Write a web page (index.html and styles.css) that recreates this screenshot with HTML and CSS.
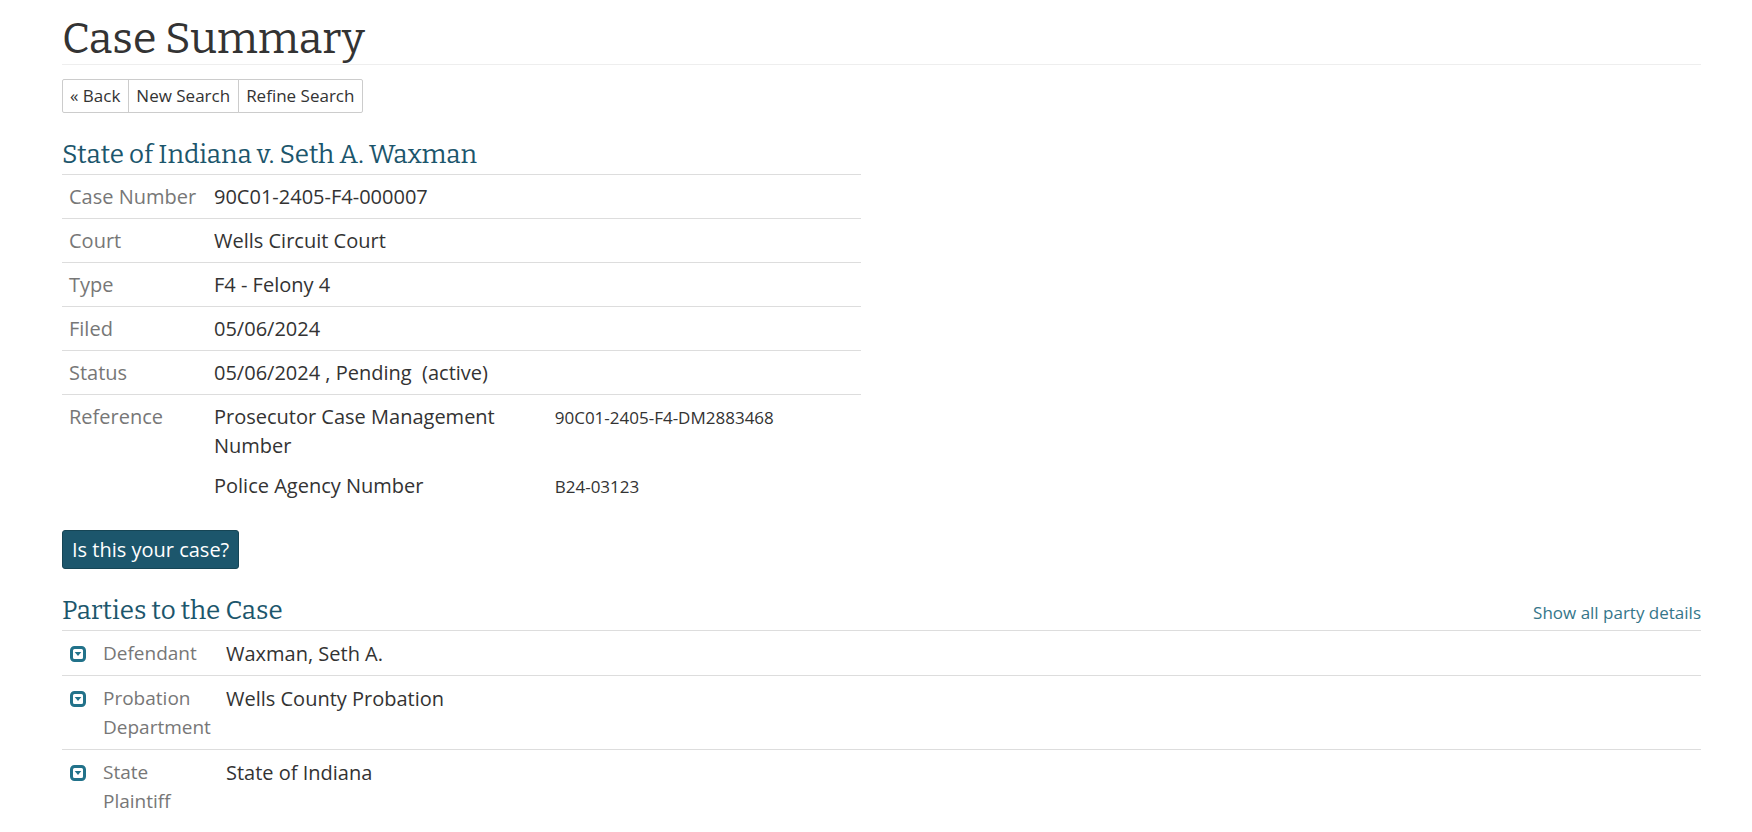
FILE: index.html
```html
<!DOCTYPE html>
<html lang="en">
<head>
    <meta charset="UTF-8">
    <meta name="viewport" content="width=device-width, initial-scale=1.0">
    <title>Case Summary</title>
    <link rel="stylesheet" href="styles.css">
</head>
<body>
    <svg class="icon-defs" aria-hidden="true">
        <symbol id="expand" viewBox="0 0 16 16">
            <rect x="1.5" y="1.5" width="13" height="13" rx="3" fill="none" stroke="currentColor" stroke-width="3"/>
            <path d="M4.7 6h6.6L8 10z" fill="currentColor"/>
        </symbol>
    </svg>

    <main class="container">
        <h1 class="page-title">Case Summary</h1>

        <div class="btn-group">
            <button type="button" class="btn">« Back</button>
            <button type="button" class="btn">New Search</button>
            <button type="button" class="btn">Refine Search</button>
        </div>

        <!-- Case info -->
        <section class="case-info">
            <h2>State of Indiana v. Seth A. Waxman</h2>
            <table class="case-table">
                <tr>
                    <th scope="row">Case Number</th>
                    <td>90C01-2405-F4-000007</td>
                </tr>
                <tr>
                    <th scope="row">Court</th>
                    <td>Wells Circuit Court</td>
                </tr>
                <tr>
                    <th scope="row">Type</th>
                    <td>F4 - Felony 4</td>
                </tr>
                <tr>
                    <th scope="row">Filed</th>
                    <td>05/06/2024</td>
                </tr>
                <tr>
                    <th scope="row">Status</th>
                    <td>05/06/2024 , Pending &nbsp;(active)</td>
                </tr>
                <tr>
                    <th scope="row">Reference</th>
                    <td>
                        <dl class="references">
                            <dt>Prosecutor Case Management Number</dt>
                            <dd>90C01-2405-F4-DM2883468</dd>
                            <dt>Police Agency Number</dt>
                            <dd>B24-03123</dd>
                        </dl>
                    </td>
                </tr>
            </table>
            <button type="button" class="btn-primary">Is this your case?</button>
        </section>

        <!-- Parties -->
        <section class="parties">
            <div class="section-header">
                <h2>Parties to the Case</h2>
                <a href="#">Show all party details</a>
            </div>
            <table class="party-table">
                <tr>
                    <td class="toggle-cell"><button type="button" class="toggle" aria-label="Show details"><svg><use href="#expand"/></svg></button></td>
                    <th scope="row">Defendant</th>
                    <td>Waxman, Seth A.</td>
                </tr>
                <tr>
                    <td class="toggle-cell"><button type="button" class="toggle" aria-label="Show details"><svg><use href="#expand"/></svg></button></td>
                    <th scope="row">Probation Department</th>
                    <td>Wells County Probation</td>
                </tr>
                <tr>
                    <td class="toggle-cell"><button type="button" class="toggle" aria-label="Show details"><svg><use href="#expand"/></svg></button></td>
                    <th scope="row">State Plaintiff</th>
                    <td>State of Indiana</td>
                </tr>
            </table>
        </section>
    </main>
</body>
</html>
```
FILE: styles.css
```css
* {
    box-sizing: border-box;
}

body {
    margin: 0;
    background-color: #fff;
    color: #333;
    font-family: "Open Sans", sans-serif;
    font-size: 20px;
    line-height: 29px;
}

.container {
    padding: 14px 51px 0 62px;
}

h1,
h2 {
    font-family: Bitter, "DejaVu Serif", serif;
    font-weight: 400;
    margin: 0;
}

.page-title {
    font-size: 43px;
    line-height: 50px;
    border-bottom: 1px solid #eee;
    margin-bottom: 14px;
}

h2 {
    color: #1c566c;
    font-size: 26px;
    line-height: 38px;
    padding-top: 2px;
}

/* Buttons */
.btn-group {
    display: flex;
    margin-bottom: 21px;
}

.btn {
    background-color: #fff;
    border: 1px solid #ccc;
    color: #333;
    font-family: inherit;
    font-size: 17px;
    line-height: 24px;
    padding: 4px 8px 4px 7px;
    cursor: pointer;
}

.btn + .btn {
    margin-left: -1px;
}

.btn:first-child {
    border-radius: 2px 0 0 2px;
}

.btn:last-child {
    border-radius: 0 2px 2px 0;
}

.btn-primary {
    background-color: #1c566c;
    border: 1px solid #164555;
    border-radius: 3px;
    color: #fff;
    font-family: inherit;
    font-size: 20px;
    line-height: 29px;
    padding: 4px 9px;
    margin: 22px 0 21px;
    cursor: pointer;
}

/* Tables */
table {
    width: 100%;
    border-collapse: collapse;
    table-layout: fixed;
}

tr {
    border-top: 1px solid #ddd;
}

th,
td {
    padding: 7px;
    text-align: left;
    vertical-align: top;
}

th {
    color: #777;
    font-weight: 400;
}

.case-table {
    width: calc(50% - 21px);
}

.case-table th {
    width: 145px;
}

.references {
    display: grid;
    grid-template-columns: 1fr 1fr;
    align-items: baseline;
    column-gap: 42px;
    row-gap: 11px;
    margin: 0;
}

.references dd {
    margin: 0;
    font-size: 17px;
}

/* Parties */
.section-header {
    display: flex;
    justify-content: space-between;
    align-items: baseline;
}

.section-header a {
    color: #35768a;
    font-size: 17px;
    text-decoration: none;
}

.section-header a:hover {
    text-decoration: underline;
}

.party-table th,
.party-table td {
    padding: 8px 7px 7px;
}

.party-table th {
    width: 123px;
    font-size: 19px;
}

.party-table .toggle-cell {
    width: 34px;
    padding-left: 8px;
}

.toggle {
    display: block;
    width: 16px;
    height: 16px;
    margin-top: 7px;
    padding: 0;
    border: 0;
    background: none;
    color: #22728a;
    cursor: pointer;
}

.toggle svg {
    display: block;
    width: 16px;
    height: 16px;
}

.icon-defs {
    display: none;
}
```
